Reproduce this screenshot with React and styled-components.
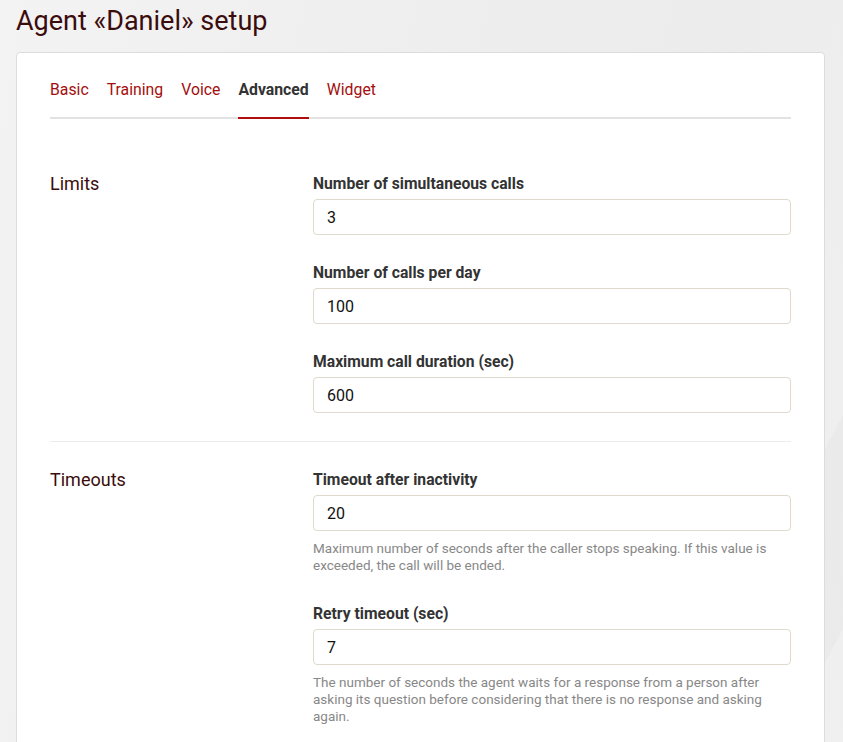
import React from 'react'
import styled, { createGlobalStyle } from 'styled-components'

const GlobalStyle = createGlobalStyle`
  html, body {
    margin: 0;
    padding: 0;
  }
  body {
    font-family: Roboto, "Liberation Sans", sans-serif;
    background-color: #efefef;
    background-image:
      linear-gradient(118deg, rgba(0,0,0,0) 84%, rgba(0,0,0,0.02) 84%, rgba(0,0,0,0.02) 93%, rgba(0,0,0,0) 93%),
      linear-gradient(100deg, #f3f3f3 0%, #eeeeee 45%, #ececec 75%, #f0f0f0 100%);
    min-height: 742px;
    overflow: hidden;
  }
`

const Page = styled.div`
  padding: 6px 18px 0 16px;
`

const Title = styled.h1`
  margin: 0 0 16px;
  font-size: 27px;
  font-weight: 400;
  line-height: 30px;
  color: #3b0c0c;
`

const Card = styled.div`
  background: #fff;
  border: 1px solid #dcdcdc;
  border-radius: 4px;
  padding: 27px 33px 40px;
`

const Tabs = styled.nav`
  display: flex;
  gap: 18px;
  border-bottom: 2px solid #e2e2e2;
  margin-bottom: 55px;
`

const Tab = styled.a`
  font-size: 15.8px;
  line-height: 20px;
  padding-bottom: 17px;
  margin-bottom: -2px;
  color: ${(p) => (p.active ? '#333' : '#a30e0e')};
  font-weight: ${(p) => (p.active ? 700 : 400)};
  border-bottom: 2px solid ${(p) => (p.active ? '#b00d0d' : 'transparent')};
  cursor: pointer;
`

const Section = styled.section`
  display: grid;
  grid-template-columns: 263px 1fr;
  padding: ${(p) => (p.first ? '0 0 28px' : '28px 0')};
  border-bottom: ${(p) => (p.last ? 'none' : '1px solid #ececec')};
`

const SectionTitle = styled.h2`
  margin: 0;
  font-size: 18px;
  font-weight: 400;
  line-height: 20px;
  color: #3b0c0c;
`

const Fields = styled.div`
  display: flex;
  flex-direction: column;
  gap: 28px;
`

const Field = styled.div`
  display: flex;
  flex-direction: column;
`

const Label = styled.label`
  font-size: 15.7px;
  font-weight: 700;
  line-height: 20px;
  color: #333;
  margin-bottom: 5px;
`

const Input = styled.input`
  box-sizing: border-box;
  height: 36px;
  width: 100%;
  border: 1px solid #e0d8cd;
  border-radius: 4px;
  padding: 0 13px;
  font-family: Roboto, "Liberation Sans", sans-serif;
  font-size: 16px;
  color: #111;
  background: #fff;
  outline: none;
`

const Help = styled.p`
  margin: 9px 0 2px;
  font-size: 13.5px;
  line-height: 17px;
  color: #888;
`

const sections = [
  {
    title: 'Limits',
    fields: [
      { label: 'Number of simultaneous calls', value: '3' },
      { label: 'Number of calls per day', value: '100' },
      { label: 'Maximum call duration (sec)', value: '600' },
    ],
  },
  {
    title: 'Timeouts',
    fields: [
      {
        label: 'Timeout after inactivity',
        value: '20',
        help: 'Maximum number of seconds after the caller stops speaking. If this value is exceeded, the call will be ended.',
      },
      {
        label: 'Retry timeout (sec)',
        value: '7',
        help: 'The number of seconds the agent waits for a response from a person after asking its question before considering that there is no response and asking again.',
      },
    ],
  },
]

const tabs = ['Basic', 'Training', 'Voice', 'Advanced', 'Widget']

const App = () => (
  <Page>
    <GlobalStyle />
    <Title>Agent «Daniel» setup</Title>
    <Card>
      <Tabs>
        {tabs.map((t) => (
          <Tab key={t} active={t === 'Advanced' ? 1 : 0}>
            {t}
          </Tab>
        ))}
      </Tabs>
      {sections.map((s, i) => (
        <Section key={s.title} first={i === 0 ? 1 : 0} last={i === sections.length - 1 ? 1 : 0}>
          <SectionTitle>{s.title}</SectionTitle>
          <Fields>
            {s.fields.map((f) => (
              <Field key={f.label}>
                <Label>{f.label}</Label>
                <Input defaultValue={f.value} />
                {f.help && <Help>{f.help}</Help>}
              </Field>
            ))}
          </Fields>
        </Section>
      ))}
    </Card>
  </Page>
)

export default App
